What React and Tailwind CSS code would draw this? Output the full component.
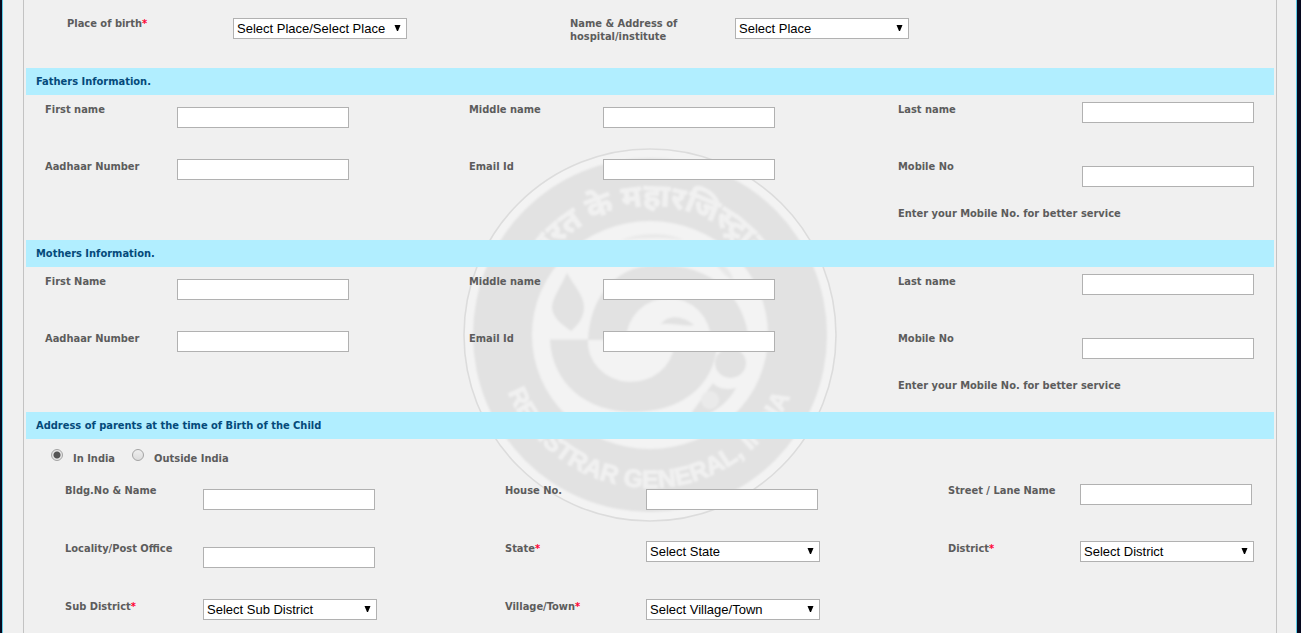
import React from "react";

const labelClass = "pt-2 text-[11px] leading-[13px] font-bold text-[#5c5c5c]";

function Label({ htmlFor, required, children }) {
  return (
    <div className={labelClass}>
      <label htmlFor={htmlFor}>
        {children}
        {required && <span className="text-[#ff0033]">*</span>}
      </label>
    </div>
  );
}

function TextInput({ id, type = "text" }) {
  return (
    <input
      id={id}
      name={id}
      type={type}
      className="block h-[21px] w-[172px] border border-[#b1b1b1] bg-white px-1 text-[13px] text-black outline-none"
    />
  );
}

function Select({ id, options }) {
  return (
    <div className="relative w-[174px]">
      <select
        id={id}
        name={id}
        className="block h-[21px] w-full appearance-none border border-[#b1b1b1] bg-white pr-[18px] pl-[3px] font-['Liberation_Sans',Arial,sans-serif] text-[13px] leading-[19px] text-black outline-none"
      >
        {options.map((o) => (
          <option key={o}>{o}</option>
        ))}
      </select>
      <svg
        className="pointer-events-none absolute top-[7px] right-[6px] h-[6px] w-[7px]"
        viewBox="0 0 7 6"
        aria-hidden="true"
      >
        <path d="M0.500 0H6.500L4 6H3Z" fill="#000" />
      </svg>
    </div>
  );
}

function SectionTitle({ children }) {
  return (
    <h2 className="h-[27px] bg-[#b1eeff] pl-[10px] text-[11px] leading-[27px] font-bold text-[#044a7a]">
      {children}
    </h2>
  );
}

function Radio({ id, label, defaultChecked }) {
  return (
    <div className="flex items-start">
      <input
        id={id}
        type="radio"
        name="country"
        defaultChecked={defaultChecked}
        className="mt-[10px] h-3 w-3 shrink-0 appearance-none rounded-full border border-[#a3a3a3] bg-[linear-gradient(#eeeeee,#dcdcdc)] checked:bg-[radial-gradient(circle,#555555_0_3px,#e6e6e6_4px)]"
      />
      <label
        htmlFor={id}
        className="ml-[10px] pt-[13px] text-[11px] leading-[13px] font-bold text-[#5c5c5c]"
      >
        {label}
      </label>
    </div>
  );
}

function ParentSection({ id, title, firstLabel }) {
  return (
    <section>
      <SectionTitle>{title}</SectionTitle>
      <div className="grid grid-cols-[132fr_292fr_134fr_295fr_184fr_192fr] grid-rows-[57px_47px_41px] pl-[19px]">
        <Label htmlFor={`${id}-first`}>{firstLabel}</Label>
        <div className="pt-3"><TextInput id={`${id}-first`} /></div>
        <Label htmlFor={`${id}-middle`}>Middle name</Label>
        <div className="pt-3"><TextInput id={`${id}-middle`} /></div>
        <Label htmlFor={`${id}-last`}>Last name</Label>
        <div className="pt-[7px]"><TextInput id={`${id}-last`} /></div>

        <Label htmlFor={`${id}-aadhaar`}>Aadhaar Number</Label>
        <div className="pt-[7px]"><TextInput id={`${id}-aadhaar`} /></div>
        <Label htmlFor={`${id}-email`}>Email Id</Label>
        <div className="pt-[7px]"><TextInput id={`${id}-email`} type="email" /></div>
        <Label htmlFor={`${id}-mobile`}>Mobile No</Label>
        <div className="pt-[14px]"><TextInput id={`${id}-mobile`} type="tel" /></div>

        <p className="col-span-2 col-start-5 pt-2 text-[11px] leading-[13px] font-bold text-[#5c5c5c]">
          Enter your Mobile No. for better service
        </p>
      </div>
    </section>
  );
}

function Emblem() {
  return (
    <svg
      className="h-[374px] w-[374px]"
      viewBox="462 148 374 374"
      aria-hidden="true"
    >
      <defs>
        <filter id="soft" x="-5%" y="-5%" width="110%" height="110%">
          <feGaussianBlur stdDeviation="1.3" />
        </filter>
        <path id="arc-top" d="M520 335A129 129 0 0 1 778 335" />
        <path id="arc-bottom" d="M496 335A153 153 0 0 0 802 335" />
      </defs>
      <circle cx="649" cy="335" r="186" fill="#f3f3f3" stroke="#dcdcdc" strokeWidth="1.6" />
      <g filter="url(#soft)">
        <circle cx="649" cy="335" r="177" fill="#e2e2e2" />
        <g fill="#f1f1f1" stroke="#f1f1f1" strokeWidth="0.8" fontWeight="bold" textAnchor="middle">
          <text fontSize="31" fontFamily="'Noto Sans Devanagari','Noto Sans',sans-serif">
            <textPath href="#arc-top" startOffset="48%">भारत के महारजिस्ट्रार</textPath>
          </text>
          <text fontSize="25" fontFamily="'Liberation Sans',Arial,sans-serif">
            <textPath href="#arc-bottom" startOffset="49.500%">REGISTRAR GENERAL, INDIA</textPath>
          </text>
        </g>
        <ellipse cx="649" cy="335" rx="118" ry="114" fill="#f3f3f3" />
        <g fill="#e2e2e2">
          <path d="M566 273C574 287 583 296 583 307C583 318 577 325 570 331C562 325 551 318 551 307C552 297 559 288 566 273Z" />
          <path d="M587 340C589 301 610 267 654 265C708 263 744 294 748 341L710 341A42.500 42.500 0 0 0 625 340Z" />
          <path d="M549 339.500H587A43 39.500 0 0 0 673 345H716C713 387 679 412 632 412C586 412 551 384 549 339.500Z" />
          <ellipse cx="729.500" cy="363" rx="15.500" ry="15" />
          <path d="M712 383C717 389 726 390 735 388C728 401 716 411 701 417C693 418 687 415 694 408Z" />
          <path d="M620 240C640 232 666 232 682 240C660 237 642 238 620 240Z" opacity="0.6" />
          <path d="M660 324C668 314 682 316 693 325C684 327 672 323 660 324Z" />
          <path d="M719 263C726 267 731 273 732 280C725 277 720 270 716 266Z" opacity="0.7" />
        </g>
        <circle cx="709" cy="400" r="9" fill="#eaeaea" />
      </g>
    </svg>
  );
}

export default function App() {
  return (
    <div className="min-h-screen bg-[#07091f] pr-1 pl-[2px] font-['DejaVu_Sans_Condensed','Noto_Sans',sans-serif]">
      <div className="min-h-screen border-x border-[#5fcbe6] bg-[#f0f0f0] pr-[19px] pl-5">
        <form className="relative min-h-screen border-x border-[#c3c3c3] px-[2px]">
          <div className="pointer-events-none absolute inset-x-0 top-[148px] flex justify-center overflow-hidden">
            <Emblem />
          </div>
          <div className="relative">
            <div className="grid grid-cols-[166fr_337fr_165fr_539fr] pb-[25px] pl-[41px]">
              <div className="pt-[9px]"><Label htmlFor="place" required>Place of birth</Label></div>
              <div className="pt-[18px]">
                <Select id="place" options={["Select Place/Select Place"]} />
              </div>
              <div className="pt-[9px]">
                <Label htmlFor="hospital">Name &amp; Address of<br />hospital/institute</Label>
              </div>
              <div className="pt-[18px]"><Select id="hospital" options={["Select Place"]} /></div>
            </div>

            <ParentSection id="father" title="Fathers Information." firstLabel="First name" />
            <ParentSection id="mother" title="Mothers Information." firstLabel="First Name" />

            <section>
              <SectionTitle>Address of parents at the time of Birth of the Child</SectionTitle>
              <div className="flex h-[37px] gap-[17px] pl-[25px]">
                <Radio id="in-india" label="In India" defaultChecked />
                <Radio id="outside-india" label="Outside India" />
              </div>
              <div className="grid grid-cols-[138fr_302fr_141fr_302fr_132fr_194fr] grid-rows-[58px_58px_41px] pl-[39px]">
                <Label htmlFor="building">Bldg.No &amp; Name</Label>
                <div className="pt-[13px]"><TextInput id="building" /></div>
                <Label htmlFor="house">House No.</Label>
                <div className="pt-[13px]"><TextInput id="house" /></div>
                <Label htmlFor="street">Street / Lane Name</Label>
                <div className="pt-2"><TextInput id="street" /></div>

                <Label htmlFor="locality">Locality/Post Office</Label>
                <div className="pt-[13px]"><TextInput id="locality" /></div>
                <Label htmlFor="state" required>State</Label>
                <div className="pt-[7px]"><Select id="state" options={["Select State"]} /></div>
                <Label htmlFor="district" required>District</Label>
                <div className="pt-[7px]"><Select id="district" options={["Select District"]} /></div>

                <Label htmlFor="subdistrict" required>Sub District</Label>
                <div className="pt-[7px]"><Select id="subdistrict" options={["Select Sub District"]} /></div>
                <Label htmlFor="village" required>Village/Town</Label>
                <div className="pt-[7px]"><Select id="village" options={["Select Village/Town"]} /></div>
              </div>
            </section>
          </div>
        </form>
      </div>
    </div>
  );
}
